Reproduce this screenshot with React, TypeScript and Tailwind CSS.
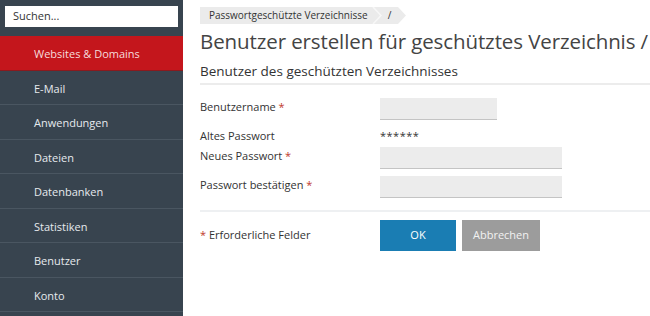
import React from "react";

const items = [
  "Websites & Domains",
  "E-Mail",
  "Anwendungen",
  "Dateien",
  "Datenbanken",
  "Statistiken",
  "Benutzer",
  "Konto",
];

function Req() {
  return <span className="text-[#c0392b]"> *</span>;
}

export default function App() {
  return (
    <div
      className="flex w-[650px] h-[316px] overflow-hidden bg-white"
      style={{ fontFamily: '"Open Sans", sans-serif' }}
    >
      <aside className="w-[183px] shrink-0 bg-[#38444f] flex flex-col">
        <div className="h-[36px] px-[5px] pt-[6px]">
          <div className="h-[21px] bg-white flex items-center px-[8px] text-[11px] text-[#333]">
            Suchen...
          </div>
        </div>
        {items.map((it, i) => (
          <div
            key={it}
            className={
              i === 0
                ? "h-[34.5px] shrink-0 flex items-center pt-[3px] pl-[34px] bg-[#c4161c] text-[#f6dcdc] text-[11px] border-b border-[#8a1a1e]"
                : "h-[34.5px] shrink-0 flex items-center pt-[3px] pl-[34px] text-[#e6eaee] text-[11px] border-b border-[#4a5661]"
            }
          >
            {it}
          </div>
        ))}
      </aside>
      <main className="flex-1 min-w-0 pl-[17px] pt-[7px] text-[#333]">
        <div className="flex items-center h-[17px]">
          <div className="h-[17px] bg-[#ebebeb] flex items-center pl-[9px] pr-[4px] text-[10px] text-[#333]">
            Passwortgeschützte Verzeichnisse
          </div>
          <svg width="10" height="17" viewBox="0 0 10 17" className="shrink-0 bg-[#ebebeb]">
            <polyline points="1,0 9,8.5 1,17" fill="none" stroke="#f7f7f7" strokeWidth="1.5" />
          </svg>
          <div className="h-[17px] bg-[#ebebeb] flex items-center pl-[6px] pr-[7px] text-[10px] text-[#333]">
            /
          </div>
          <svg width="8" height="17" viewBox="0 0 8 17" className="shrink-0">
            <polygon points="0,0 8,8.5 0,17" fill="#ebebeb" />
          </svg>
        </div>
        <h1 className="text-[20.5px] leading-[30px] text-[#444] mt-[2px] whitespace-nowrap tracking-[-0.1px]">
          Benutzer erstellen für geschütztes Verzeichnis /
        </h1>
        <div className="mt-[5px] text-[13.5px] leading-[20px] text-[#333] border-b-2 border-[#ececec] pb-[2px]">
          Benutzer des geschützten Verzeichnisses
        </div>
        <div className="text-[11px] mt-[13px]">
          <div className="flex items-center h-[22px]">
            <div className="w-[180px] -mt-[3px]">
              Benutzername
              <Req />
            </div>
            <div className="w-[117px] h-[22px] bg-[#ececec] border-b border-[#c4c4c4]" />
          </div>
          <div className="flex items-center h-[20px] mt-[6px]">
            <div className="w-[180px]">Altes Passwort</div>
            <div className="text-[11px] tracking-[0.5px]">******</div>
          </div>
          <div className="flex items-center h-[22px] mt-[1px]">
            <div className="w-[180px] -mt-[4px]">
              Neues Passwort
              <Req />
            </div>
            <div className="w-[182px] h-[22px] bg-[#ececec] border-b border-[#c4c4c4]" />
          </div>
          <div className="flex items-center h-[22px] mt-[7px]">
            <div className="w-[180px] -mt-[3px]">
              Passwort bestätigen
              <Req />
            </div>
            <div className="w-[182px] h-[22px] bg-[#ececec] border-b border-[#c4c4c4]" />
          </div>
          <div className="mt-[12px] border-t-2 border-[#eef0f2]" />
          <div className="flex items-center mt-[8px] h-[31px]">
            <div className="w-[180px]">
              <span className="text-[#c0392b]">* </span>Erforderliche Felder
            </div>
            <div className="w-[76px] h-[31px] bg-[#1a7db3] text-white flex items-center justify-center">
              OK
            </div>
            <div className="ml-[6px] w-[78px] h-[31px] bg-[#9c9c9c] text-[#f2f2f2] flex items-center justify-center">
              Abbrechen
            </div>
          </div>
        </div>
      </main>
    </div>
  );
}
